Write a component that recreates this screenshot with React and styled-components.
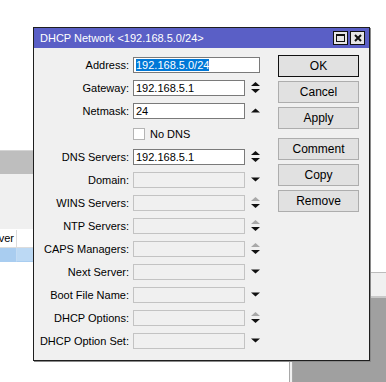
import React from 'react';
import styled, { createGlobalStyle } from 'styled-components';

const GlobalStyle = createGlobalStyle`
  html, body {
    margin: 0;
    padding: 0;
    background: #ffffff;
  }
  body {
    font-family: 'Liberation Sans', Arial, sans-serif;
    font-size: 11px;
    color: #000;
  }
`;

const Desktop = styled.div`
  position: relative;
  width: 386px;
  height: 382px;
  overflow: hidden;
  background: #fff;
`;

/* window behind, on the left */
const ListWindow = styled.div`
  position: absolute;
  left: -10px;
  top: 150px;
  width: 60px;
  height: 111px;
  display: flex;
  flex-direction: column;
  border-top: 1px solid #d4d4d4;
  background: #f0f0f0;
`;

const ListToolbar = styled.div`
  height: 23px;
  background: #bebebe;
`;

const ListSpacer = styled.div`
  flex: 1;
  border-bottom: 1px solid #fff;
`;

const ListRow = styled.div`
  display: grid;
  grid-template-columns: 27px 1fr;
  height: ${({ $h }) => $h}px;
`;

const ListCell = styled.div`
  border-right: 1px solid ${({ $sel }) => ($sel ? '#c4dcf4' : '#dcdcdc')};
  border-bottom: 1px solid ${({ $sel }) => ($sel ? '#a9cdf0' : '#dcdcdc')};
  background: ${({ $bg }) => $bg};
  line-height: 17px;
  text-align: right;
  padding-right: 2px;
  overflow: hidden;
  white-space: nowrap;
`;

/* window behind, bottom right */
const SideWindow = styled.div`
  position: absolute;
  left: 289px;
  top: 272px;
  width: 110px;
  height: 120px;
  display: flex;
  flex-direction: column;
  border-top: 1px solid #bcbcbc;
  border-left: 4px double #a8a8a8;
  background: #f0f0f0;
`;

const SideBar = styled.div`
  height: 23px;
  border-bottom: 2px solid #c8c8c8;
`;

const SidePane = styled.div`
  flex: 1;
  background: #a0a0a0;
`;

const Dialog = styled.div`
  position: absolute;
  left: 33px;
  top: 27px;
  width: 335px;
  border: 1px solid #1e1e1e;
  background: #f0f0f0;
  display: flex;
  flex-direction: column;
  box-shadow: 1px 1px 0 #8a8a8a;
`;

const TitleBar = styled.div`
  height: 20px;
  background: #5a5fc6;
  color: #fff;
  display: flex;
  align-items: center;
  padding: 0 4px 0 6px;
  font-size: 11px;
`;

const TitleText = styled.span`
  flex: 1;
`;

const TitleButton = styled.div`
  width: 13px;
  height: 12px;
  margin-left: 2px;
  border: 1px solid #111;
  background: #e6e6e6;
  display: flex;
  align-items: center;
  justify-content: center;
`;

const Body = styled.div`
  display: flex;
  padding: 5px 8px 8px 0;
  gap: 20px;
`;

const Form = styled.div`
  display: grid;
  grid-template-columns: 95px 112px 9px;
  grid-auto-rows: 23px;
  column-gap: 4px;
  align-items: center;
`;

const Label = styled.label`
  text-align: right;
  white-space: nowrap;
`;

const Field = styled.div`
  height: 16px;
  box-sizing: border-box;
  border: 1px solid ${({ $disabled }) => ($disabled ? '#c3c3c3' : '#7a7a7a')};
  background: ${({ $disabled }) => ($disabled ? '#f0f0f0' : '#fff')};
  padding-left: 2px;
  line-height: 14px;
  grid-column: ${({ $wide }) => ($wide ? 'span 2' : 'auto')};
  margin-right: ${({ $wide }) => ($wide ? '-2px' : '0')};
  white-space: nowrap;
  overflow: hidden;
`;

const Selected = styled.span`
  background: #0078d7;
  color: #fff;
`;

const CheckRow = styled.div`
  grid-column: 2 / span 2;
  display: flex;
  align-items: center;
  gap: 5px;
`;

const CheckBox = styled.span`
  width: 12px;
  height: 12px;
  box-sizing: border-box;
  border: 1px solid #b4b4b4;
  background: #fff;
`;

const ArrowBox = styled.svg`
  display: block;
  margin-left: 2px;
`;

const Buttons = styled.div`
  display: flex;
  flex-direction: column;
  gap: 4px;
  padding-top: 2px;
`;

const Button = styled.div`
  width: 81px;
  height: 22px;
  box-sizing: border-box;
  border: 1px solid ${({ $default }) => ($default ? '#111' : '#adadad')};
  background: #e1e1e1;
  display: flex;
  align-items: center;
  justify-content: center;
  font-size: 12px;
  margin-top: ${({ $gap }) => ($gap ? '5px' : '0')};
`;

const Arrows = ({ up, down, dim }) => {
  const both = up && down;
  return (
    <ArrowBox width="9" height="11" viewBox="0 0 9 11">
      {up && (
        <polygon
          points={both ? '0,4 4.5,0 9,4' : '0,7.5 4.5,3.5 9,7.5'}
          fill={dim ? '#a8a8a8' : '#111'}
        />
      )}
      {down && (
        <polygon
          points={both ? '0,7 4.5,11 9,7' : '0,3.5 4.5,7.5 9,3.5'}
          fill="#111"
        />
      )}
    </ArrowBox>
  );
};

const rows = [
  { label: 'Address', value: 'sel', wide: true },
  { label: 'Gateway', value: '192.168.5.1', up: true, down: true },
  { label: 'Netmask', value: '24', up: true },
  { check: true },
  { label: 'DNS Servers', value: '192.168.5.1', up: true, down: true },
  { label: 'Domain', disabled: true, down: true },
  { label: 'WINS Servers', disabled: true, up: true, down: true, dim: true },
  { label: 'NTP Servers', disabled: true, up: true, down: true, dim: true },
  { label: 'CAPS Managers', disabled: true, up: true, down: true, dim: true },
  { label: 'Next Server', disabled: true, down: true },
  { label: 'Boot File Name', disabled: true, down: true },
  { label: 'DHCP Options', disabled: true, up: true, down: true, dim: true },
  { label: 'DHCP Option Set', disabled: true, down: true },
];

const App = () => (
  <Desktop>
    <GlobalStyle />
    <ListWindow>
      <ListToolbar />
      <ListSpacer />
      <ListRow $h={18}>
        <ListCell $bg="#fff">ver</ListCell>
        <ListCell $bg="#fff" />
      </ListRow>
      <ListRow $h={14}>
        <ListCell $sel $bg="#a9cdf0" />
        <ListCell $sel $bg="#bcd9f4" />
      </ListRow>
    </ListWindow>
    <SideWindow>
      <SideBar />
      <SidePane />
    </SideWindow>
    <Dialog>
      <TitleBar>
        <TitleText>DHCP Network &lt;192.168.5.0/24&gt;</TitleText>
        <TitleButton>
          <svg width="9" height="8" viewBox="0 0 9 8">
            <rect x="0.5" y="0.5" width="8" height="7" fill="none" stroke="#111" />
            <rect x="0" y="0" width="9" height="2" fill="#111" />
          </svg>
        </TitleButton>
        <TitleButton>
          <svg width="8" height="8" viewBox="0 0 8 8">
            <path d="M1 1 L7 7 M7 1 L1 7" stroke="#111" strokeWidth="2" />
          </svg>
        </TitleButton>
      </TitleBar>
      <Body>
        <Form>
          {rows.map((r, i) =>
            r.check ? (
              <React.Fragment key={i}>
                <span />
                <CheckRow>
                  <CheckBox />
                  No DNS
                </CheckRow>
              </React.Fragment>
            ) : (
              <React.Fragment key={i}>
                <Label>{r.label}:</Label>
                <Field $disabled={r.disabled} $wide={r.wide}>
                  {r.value === 'sel' ? <Selected>192.168.5.0/24</Selected> : r.value}
                </Field>
                {!r.wide && <Arrows up={r.up} down={r.down} dim={r.dim} />}
              </React.Fragment>
            )
          )}
        </Form>
        <Buttons>
          <Button $default>OK</Button>
          <Button>Cancel</Button>
          <Button>Apply</Button>
          <Button $gap>Comment</Button>
          <Button>Copy</Button>
          <Button>Remove</Button>
        </Buttons>
      </Body>
    </Dialog>
  </Desktop>
);

export default App;
